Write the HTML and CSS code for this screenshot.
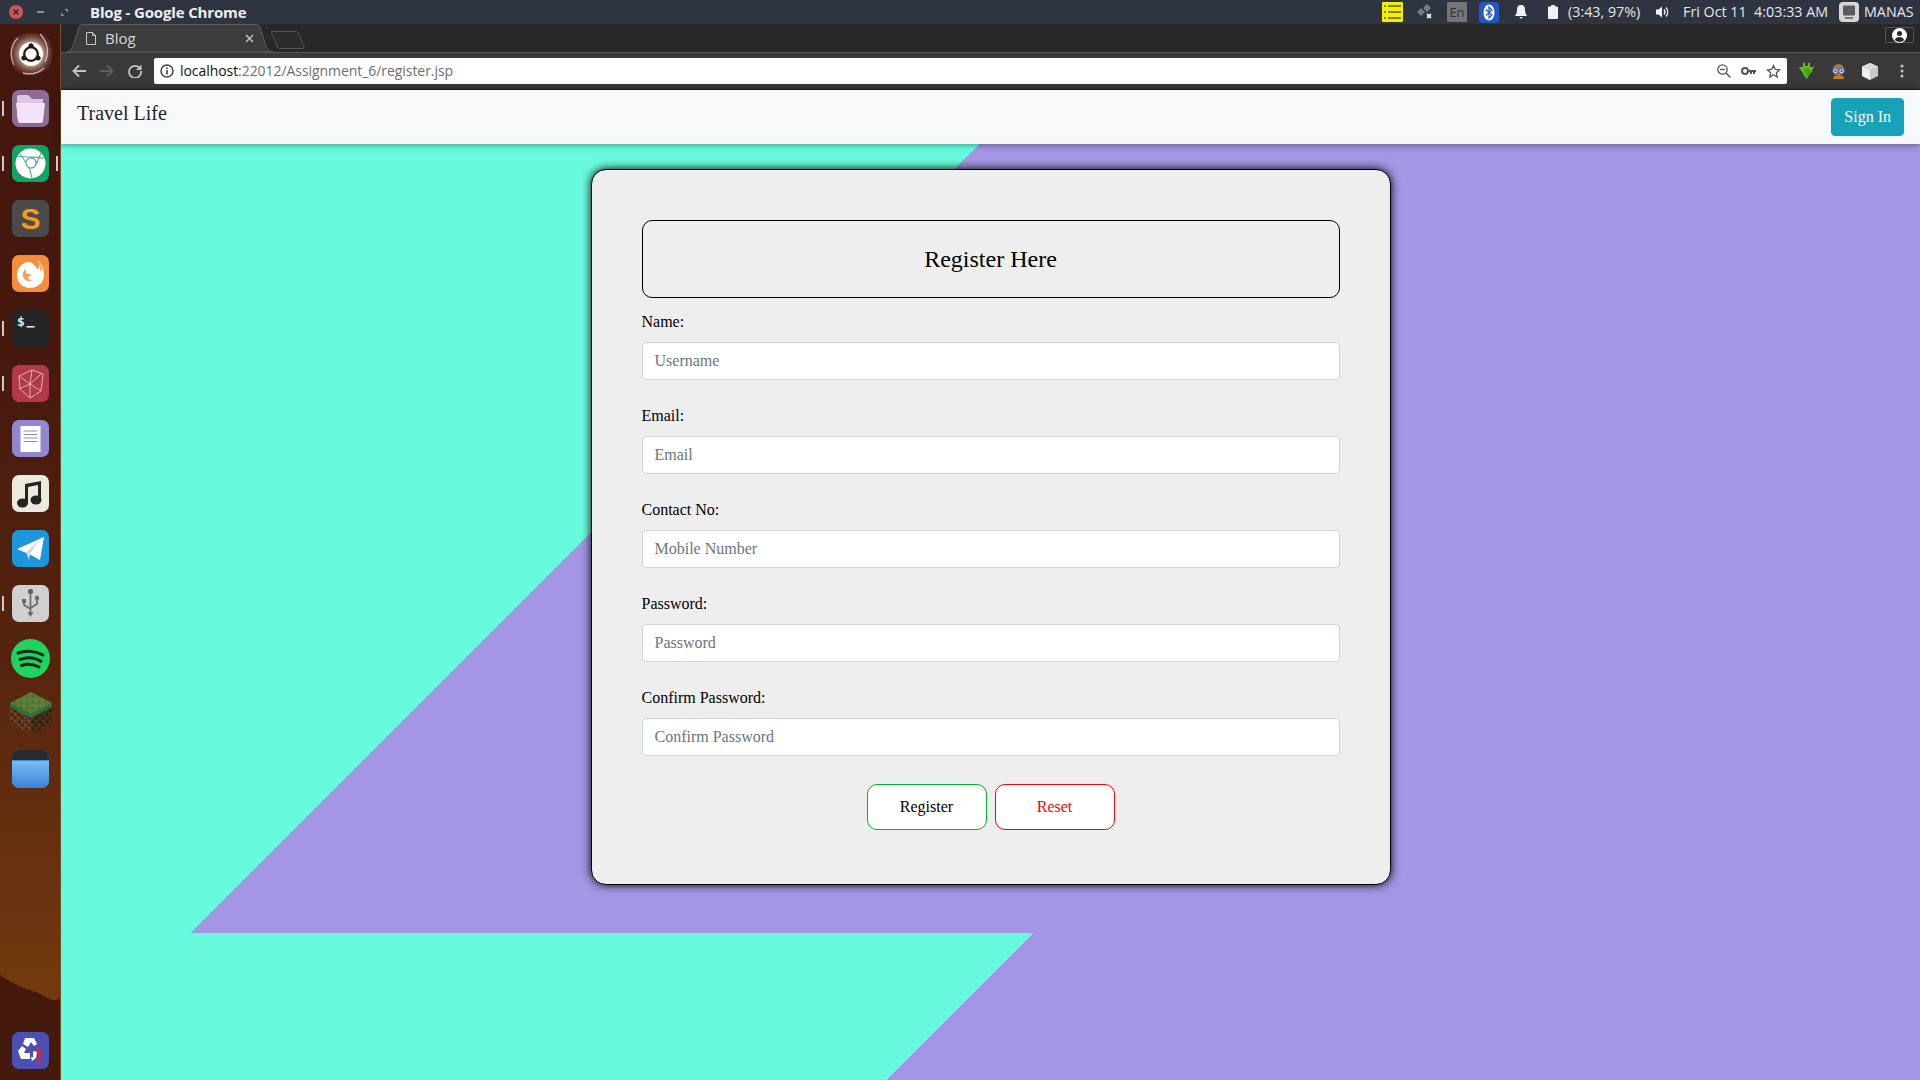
FILE: index.html
```html
<!DOCTYPE html>
<html lang="en">
<head>
<meta charset="utf-8">
<title>Blog</title>
<link rel="stylesheet" href="styles.css">
</head>
<body>
<div class="screen">
  <header class="panel">
    <svg class="win-close" width="14" height="14" viewBox="0 0 14 14"><circle cx="7" cy="7" r="7" fill="#cc575d"/><path d="M4.500 4.500l5 5M9.500 4.500l-5 5" stroke="#3a2a30" stroke-width="1.600"/></svg>
    <svg class="win-min" width="7" height="2" viewBox="0 0 7 2"><rect width="7" height="2" fill="#8a8f9a"/></svg>
    <svg class="win-max" width="7" height="7" viewBox="0 0 7 7"><path d="M3.500 0H7V3.500ZM3.500 7H0V3.500Z" fill="#8a8f9a"/></svg>
    <span class="win-title">Blog - Google Chrome</span>
    <div class="tray">
      <svg class="t-notes" width="21" height="20" viewBox="0 0 21 20"><rect width="21" height="20" rx="1" fill="#f4f000"/><path d="M2 4h2M6 4h13M2 10h2M6 10h13M2 16h2M6 16h13" stroke="#5c5c10" stroke-width="1.600"/></svg>
      <svg class="t-net" width="15" height="16" viewBox="0 0 15 16"><path d="M0 8l4-4 4 4-4 4zM6 4l4-4 4 4-4 4z" fill="#777b84"/><path d="M10 10l4 4M14 10l-4 4" stroke="#eee" stroke-width="1.800"/></svg>
      <span class="t-en">En</span>
      <svg class="t-bt" width="20" height="21" viewBox="0 0 20 21"><rect width="20" height="21" rx="4" fill="#2359c4"/><ellipse cx="10" cy="10.500" rx="5.500" ry="8" fill="#fff"/><path d="M7 7.500l6 5.500-3 3V5l3 3-6 5.500" fill="none" stroke="#2359c4" stroke-width="1.200"/></svg>
      <svg class="t-bell" width="12" height="14" viewBox="0 0 12 14"><path d="M6 0c-3 0-4 2-4 4.500C2 8 1 9.500 0 10.500V11h12v-.5C11 9.500 10 8 10 4.500 10 2 9 0 6 0zM4.500 12a1.500 1.500 0 0 0 3 0z" fill="#f2f2f2"/></svg>
      <svg class="t-bat" width="10" height="14" viewBox="0 0 10 14"><path d="M3 0h4v1.500h2a1 1 0 0 1 1 1V13a1 1 0 0 1-1 1H1a1 1 0 0 1-1-1V2.500a1 1 0 0 1 1-1h2z" fill="#f2f2f2"/></svg>
      <span class="t-text t-battxt">(3:43, 97%)</span>
      <svg class="t-vol" width="13" height="14" viewBox="0 0 13 14"><path d="M0 4.500h2.500L6 1.500v11L2.500 9.500H0z" fill="#f2f2f2"/><path d="M8 4.500a4 4 0 0 1 0 5M10 2.500a7 7 0 0 1 0 9" fill="none" stroke="#f2f2f2" stroke-width="1.300"/></svg>
      <span class="t-text t-clock">Fri Oct 11&nbsp; 4:03:33 AM</span>
      <svg class="t-pc" width="20" height="20" viewBox="0 0 20 20"><rect width="20" height="20" rx="4" fill="#d6d6d6"/><rect x="4" y="3.500" width="12" height="10" rx="1" fill="#5a5a5a"/><rect x="6" y="15" width="8" height="2" fill="#777"/></svg>
      <span class="t-text t-user">MANAS</span>
    </div>
  </header>

  <div class="desk">
    <aside class="dock">
      <svg class="dock-hill" width="60" height="105" viewBox="0 0 60 105"><path d="M0 0C10 7 20 12 30 15S44 22 50 24 56 25 60 23V105H0z" fill="#431a0b"/></svg>

      <div class="cell"><svg width="44" height="44" viewBox="0 0 44 44"><defs><radialGradient id="glow"><stop offset=".45" stop-color="#e8d6cc" stop-opacity=".9"/><stop offset="1" stop-color="#8a5a48" stop-opacity=".25"/></radialGradient></defs><path d="M10 3C20-1 36 0 41 9c4 9 3 24-3 29-8 6-24 7-31 1C1 33 0 20 2 12 3 8 6 5 10 3z" fill="url(#glow)"/><path d="M31 2c7 7 10 18 5 28M5 33C0 24 2 12 9 6M14 41c8 2 16 0 21-5" fill="none" stroke="#f2e6de" stroke-width="1.300" opacity=".7"/><circle cx="22" cy="22" r="12" fill="#fff"/><circle cx="22" cy="22" r="6.800" fill="none" stroke="#2d130c" stroke-width="2.300"/><circle cx="22" cy="13.800" r="2.500" fill="#2d130c"/><circle cx="14.900" cy="26.100" r="2.500" fill="#2d130c"/><circle cx="29.100" cy="26.100" r="2.500" fill="#2d130c"/></svg></div>

      <div class="cell pip-l"><svg width="37" height="37" viewBox="0 0 37 37"><rect width="37" height="37" rx="7" fill="#8c6c92"/><path d="M5 7a2 2 0 0 1 2-2h9l4 4h11v19H5z" fill="#dcc6e4"/><path d="M4 13h29l-2 18a2 2 0 0 1-2 2H8a2 2 0 0 1-2-2z" fill="#f4e2f6"/></svg></div>

      <div class="cell pip-l pip-r"><svg width="37" height="37" viewBox="0 0 37 37"><rect width="37" height="37" rx="7" fill="#10a564"/><circle cx="18.500" cy="18.500" r="15" fill="#fff"/><circle cx="19" cy="18" r="5" fill="#fff" stroke="#5cae8c" stroke-width="1.300"/><path d="M5.500 11.500c6-.5 16 1 27 1.500M8 9l9 13 3 11M29 8c-2 5-4 10-6 13" fill="none" stroke="#5cae8c" stroke-width="1.100"/><circle cx="19" cy="18" r="4.300" fill="#fff"/></svg></div>

      <div class="cell"><svg width="37" height="37" viewBox="0 0 37 37"><rect width="37" height="37" rx="7" fill="#4a4a4a"/><text class="ic-s" x="18.500" y="29" text-anchor="middle">S</text></svg></div>

      <div class="cell"><svg width="37" height="37" viewBox="0 0 37 37"><rect width="37" height="37" rx="7" fill="#f68d3a"/><path d="M18 7c-8 0-13 6-13 13 0 8 6 13 13 13 8 0 14-6 14-13 0-6-2-11-6-15 1 4 1 7 0 10-2-4-5-7-8-8z" fill="#fff"/><path d="M14 14c-3 2-4 5-3 8 2 4 6 5 9 4-2-1-4-2-4-4l4-2-6-2c0-1 0-3 0-4z" fill="#f68d3a" opacity=".85"/><path d="M24 5c3 3 5 7 5 11M27 7c2 3 3 6 3 9" stroke="#f68d3a" stroke-width=".9" fill="none"/></svg></div>

      <div class="cell pip-l"><svg width="37" height="37" viewBox="0 0 37 37"><rect width="37" height="37" rx="7" fill="#252525"/><text class="ic-t" x="5" y="16">$</text><rect x="14.500" y="16" width="8" height="1.600" fill="#e8e8e8"/></svg></div>

      <div class="cell pip-l"><svg width="37" height="37" viewBox="0 0 37 37"><rect width="37" height="37" rx="7" fill="#b23a48"/><path d="M7 11L20 5l11 4-2 17-11 7-10-9zM7 11l11 8 11-10M18 19v14M7 24l11-5 11 7M20 5l-2 14" fill="none" stroke="#e8bcbc" stroke-width=".9"/></svg></div>

      <div class="cell"><svg width="37" height="37" viewBox="0 0 37 37"><rect width="37" height="37" rx="7" fill="#8f88d0"/><rect x="8.500" y="6" width="20" height="26" fill="#fff"/><path d="M11.500 11h14M11.500 14.500h14M11.500 18h14M11.500 21.500h14" stroke="#8f88d0" stroke-width="1.100"/></svg></div>

      <div class="cell"><svg width="37" height="37" viewBox="0 0 37 37"><rect width="37" height="37" rx="7" fill="#ecebdc"/><path d="M13 9l16-3v19h-3V10l-10 2v16h-3z" fill="#25241f"/><ellipse cx="10.500" cy="28" rx="5.500" ry="4.500" fill="#25241f"/><ellipse cx="24" cy="25" rx="5.500" ry="4.500" fill="#25241f"/></svg></div>

      <div class="cell"><svg width="37" height="37" viewBox="0 0 37 37"><rect width="37" height="37" rx="7" fill="#1c96dc"/><path d="M5 19L32 7l-4 23-9-5z" fill="#fff"/><path d="M14 22l15-14-11 16-1 6z" fill="#cfdfec"/></svg></div>

      <div class="cell pip-l"><svg width="37" height="37" viewBox="0 0 37 37"><rect width="37" height="37" rx="7" fill="#d0d0d0"/><circle cx="18.500" cy="6.500" r="2.500" fill="#555"/><path d="M18.500 6v23M12 16v4l6.500 4M25 14v5l-6.500 4" fill="none" stroke="#6a6a6a" stroke-width="1.700"/><rect x="10" y="14" width="4" height="4" fill="#6a6a6a"/><circle cx="25" cy="13" r="2.200" fill="#6a6a6a"/><path d="M15.500 27h6l-3 5z" fill="#6a6a6a"/></svg></div>

      <div class="cell"><svg width="39" height="39" viewBox="0 0 39 39"><circle cx="19.500" cy="19.500" r="19.500" fill="#1ed35f"/><path d="M7 14c8-3 18-2 25 2M9 20.500c7-2.500 15-2 21 2M10.500 26.500c6-2 12-1.500 17.500 1.500" fill="none" stroke="#15261a" stroke-width="3" stroke-linecap="round"/></svg></div>

      <div class="cell"><svg width="42" height="43" viewBox="0 0 42 43"><defs><pattern id="dirt" width="7" height="7" patternUnits="userSpaceOnUse"><rect width="7" height="7" fill="#5c3620"/><rect x="1" y="1" width="2.500" height="2" fill="#3c2212"/><rect x="4.500" y="4" width="2" height="2" fill="#39230f"/><rect x="4" y="0" width="2" height="2" fill="#74482a"/><rect x="0" y="4" width="2" height="2" fill="#74482a"/></pattern><pattern id="grass" width="6" height="6" patternUnits="userSpaceOnUse"><rect width="6" height="6" fill="#5a7a36"/><rect x="1" y="1" width="2" height="2" fill="#668840"/><rect x="4" y="3" width="2" height="2" fill="#4e6e2e"/></pattern></defs><path d="M21 0L42 11V31L21 43 0 31V11z" fill="url(#dirt)"/><path d="M42 11V31L21 43V22z" fill="#1c0e06" opacity=".3"/><path d="M21 0L42 11 21 22 0 11z" fill="url(#grass)"/><path d="M0 11l21 11 21-11v4l-21 11L0 15z" fill="#2f7040"/></svg></div>

      <div class="cell"><svg width="37" height="38" viewBox="0 0 37 38"><defs><linearGradient id="fblue" x1="0" y1="0" x2="0" y2="1"><stop offset="0" stop-color="#76c0ec"/><stop offset="1" stop-color="#3a82dc"/></linearGradient></defs><rect width="37" height="38" rx="7" fill="#3c8be0"/><path d="M0 11h37V30a8 8 0 0 1-8 8H8a8 8 0 0 1-8-8z" fill="url(#fblue)"/><path d="M0 10V7a7 7 0 0 1 7-7h23a7 7 0 0 1 7 7v3z" fill="#2a2a2e"/></svg></div>

      <div class="cell cell-end"><svg width="37" height="37" viewBox="0 0 37 37"><rect width="37" height="37" rx="7" fill="#4a50b4"/><path d="M13 6h9l3 6-3 2-3-4-3 5-5-3zM6 19l4-5 4 3-2 4h6v6H9zM21 19l4 1-1 6-4 3-1-4h2z" fill="#fff"/><rect x="25" y="16" width="3.500" height="11" fill="#e8202c"/><rect x="25" y="29" width="3.500" height="3.500" fill="#e8202c"/></svg></div>
    </aside>

    <div class="window">
      <div class="tabstrip">
        <div class="tab">
          <svg class="tab-shape" width="206" height="28" viewBox="0 0 206 28"><path d="M0 28C3 27 5 25 6 22L12 3C13 1 14 .5 16 .5H189C191 .5 192 1 193 3L199 22C200 25 202 27 206 28z" fill="#3c3c3c" stroke="#5a5a5a"/></svg>
          <svg class="tab-doc" width="10" height="13" viewBox="0 0 10 13"><path d="M.5.5H6.500L9.500 3.500V12.500H.5zM6.500.5V3.500H9.500" fill="none" stroke="#c8c8c8"/></svg>
          <span class="tab-title">Blog</span>
          <svg class="tab-x" width="9" height="9" viewBox="0 0 9 9"><path d="M1 1l7 7M8 1L1 8" stroke="#c0c0c0" stroke-width="1.500"/></svg>
        </div>
        <svg class="newtab" width="35" height="18" viewBox="0 0 35 18"><path d="M1 .5H26C27 .5 28 1 28.500 2L34 16.500C34 17 34 17.500 33 17.500H10C9 17.500 8 17 7.500 16z" fill="#2b2b2b" stroke="#555"/></svg>
        <div class="profile"><svg width="15" height="15" viewBox="0 0 15 15"><circle cx="7.500" cy="7.500" r="7.500" fill="#fff"/><circle cx="7.500" cy="5.500" r="2.500" fill="#282828"/><path d="M2.800 12c.8-2 2.500-3 4.700-3s3.900 1 4.700 3c-1.200 1.300-2.800 2-4.700 2s-3.500-.7-4.700-2z" fill="#282828"/></svg></div>
      </div>

      <div class="toolbar">
        <svg class="tb-back" width="14" height="14" viewBox="0 0 14 14"><path d="M14 7H2M7 1.500L1.500 7 7 12.500" fill="none" stroke="#c4c4c4" stroke-width="1.900"/></svg>
        <svg class="tb-fwd" width="14" height="14" viewBox="0 0 14 14"><path d="M0 7h12M7 1.500L12.500 7 7 12.500" fill="none" stroke="#5e5e5e" stroke-width="1.900"/></svg>
        <svg class="tb-reload" width="14" height="14" viewBox="0 0 14 14"><path d="M12 4.500A6 6 0 1 0 13 7" fill="none" stroke="#c4c4c4" stroke-width="1.800"/><path d="M13.500 .5V6H8z" fill="#c4c4c4"/></svg>
        <div class="omnibox">
          <svg class="om-info" width="14" height="14" viewBox="0 0 14 14"><circle cx="7" cy="7" r="6" fill="none" stroke="#444" stroke-width="1.500"/><rect x="6.200" y="6" width="1.600" height="4.500" fill="#444"/><rect x="6.200" y="3.500" width="1.600" height="1.600" fill="#444"/></svg>
          <span class="om-url"><span class="om-host">localhost</span>:22012/Assignment_6/register.jsp</span>
          <svg class="om-zoom" width="14" height="14" viewBox="0 0 14 14"><circle cx="5.500" cy="5.500" r="4.700" fill="none" stroke="#555" stroke-width="1.300"/><path d="M9 9l4.500 4.500" stroke="#555" stroke-width="1.500"/><path d="M3 5.500h5" stroke="#555" stroke-width="1.200"/></svg>
          <svg class="om-key" width="15" height="8" viewBox="0 0 15 8"><circle cx="4" cy="4" r="3" fill="none" stroke="#555" stroke-width="2"/><path d="M7 3h8v2h-1v2h-2V5h-1v2H9V5H7z" fill="#555"/></svg>
          <svg class="om-star" width="15" height="15" viewBox="0 0 15 15"><path d="M7.500 1.500l1.800 4 4.300.4-3.300 2.900 1 4.300-3.800-2.300-3.800 2.300 1-4.300L1.400 5.900l4.300-.4z" fill="none" stroke="#555" stroke-width="1.300"/></svg>
        </div>
        <svg class="ext-dl" width="15" height="16" viewBox="0 0 15 16"><path d="M4 0h2v3H4zM9 0h2v3H9zM0 4h4V3h7v1h4L7.500 16z" fill="#5fc21a"/><path d="M4 5h7v3h3l-6.500 6z" fill="#48a510"/></svg>
        <svg class="ext-av" width="15" height="16" viewBox="0 0 15 16"><circle cx="7.500" cy="7" r="6" fill="#a57a48"/><circle cx="4.500" cy="8" r="2.700" fill="#dfe6fa" stroke="#2f55d0"/><circle cx="10.500" cy="8" r="2.700" fill="#dfe6fa" stroke="#2f55d0"/><circle cx="4.500" cy="8" r="1" fill="#333"/><circle cx="10.500" cy="8" r="1" fill="#333"/><path d="M3 13h9l1 3H2z" fill="#c47a30"/></svg>
        <svg class="ext-cube" width="16" height="17" viewBox="0 0 16 17"><path d="M8 0l8 3.500V13l-8 4-8-4V3.500z" fill="#c8c8c8"/><path d="M0 3.500L8 7v10L0 13z" fill="#eee"/><path d="M8 0l8 3.500L8 7 0 3.500z" fill="#dcdcdc"/></svg>
        <svg class="tb-menu" width="4" height="14" viewBox="0 0 4 14"><circle cx="2" cy="2" r="1.500" fill="#c4c4c4"/><circle cx="2" cy="7" r="1.500" fill="#c4c4c4"/><circle cx="2" cy="12" r="1.500" fill="#c4c4c4"/></svg>
      </div>

      <nav class="navbar">
        <a class="brand">Travel Life</a>
        <button class="signin" type="button">Sign In</button>
      </nav>

      <main class="page">
        <form class="card">
          <h3 class="card-head">Register Here</h3>
          <div class="field">
            <label class="field-label">Name:</label>
            <input class="field-input" type="text" placeholder="Username">
          </div>
          <div class="field">
            <label class="field-label">Email:</label>
            <input class="field-input" type="text" placeholder="Email">
          </div>
          <div class="field">
            <label class="field-label">Contact No:</label>
            <input class="field-input" type="text" placeholder="Mobile Number">
          </div>
          <div class="field">
            <label class="field-label">Password:</label>
            <input class="field-input" type="text" placeholder="Password">
          </div>
          <div class="field">
            <label class="field-label">Confirm Password:</label>
            <input class="field-input" type="text" placeholder="Confirm Password">
          </div>
          <div class="actions">
            <button class="btn btn-ok" type="button">Register</button>
            <button class="btn btn-reset" type="button">Reset</button>
          </div>
        </form>
      </main>
    </div>
  </div>
</div>
</body>
</html>
```
FILE: styles.css
```css
* { box-sizing: border-box; }
html, body { margin: 0; height: 100%; overflow: hidden; }
body { font-family: "Liberation Serif", serif; font-size: 16px; line-height: 24px; color: #000; }
svg { display: block; flex: none; }

.screen { display: flex; flex-direction: column; height: 100vh; }

/* top panel */
.panel { display: flex; align-items: center; height: 24px; flex: none; background: #2f3441; font-family: "Open Sans", sans-serif; color: #e8e8e8; }
.win-close { margin-left: 9px; }
.win-min { margin-left: 14px; }
.win-max { margin-left: 17px; }
.win-title { margin-left: 22px; font-size: 15px; font-weight: 700; color: #eef0f2; white-space: nowrap; letter-spacing: -.15px; }
.tray { display: flex; align-items: center; margin-left: auto; padding-right: 5px; }
.t-text { font-size: 14.3px; white-space: nowrap; color: #e6e8ea; }
.t-net { margin-left: 14px; }
.t-en { margin-left: 15px; width: 20px; height: 20px; background: #757575; border-radius: 1px; color: #333; font-size: 13px; line-height: 20px; text-align: center; }
.t-bt { margin-left: 12px; }
.t-bell { margin-left: 16px; }
.t-bat { margin-left: 21px; }
.t-battxt { margin-left: 10px; width: 73px; }
.t-vol { margin-left: 15px; }
.t-clock { margin-left: 14px; width: 145px; }
.t-pc { margin-left: 11px; }
.t-user { margin-left: 5px; width: 51px; }

/* body of the desktop */
.desk { display: flex; flex: 1; min-height: 0; }

.dock { position: relative; width: 61px; flex: none; display: flex; flex-direction: column; padding: 2px 0 2px 1px; border-right: 1px solid #7a4a20; background: linear-gradient(#44170f 0, #46190e 30%, #56240e 60%, #683210 80%, #7a3f0d 100%); }
.dock-hill { position: absolute; left: 0; bottom: 0; }
.cell { position: relative; height: 55px; flex: none; display: flex; align-items: center; justify-content: center; }
.cell-end { margin-top: auto; }
.pip-l::before, .pip-r::after { content: ""; position: absolute; top: 20px; width: 2px; height: 15px; background: #cfcac6; }
.pip-l::before { left: 1px; }
.pip-r::after { right: 2px; }
.ic-s { font: 700 30px "Liberation Sans", sans-serif; fill: #f79a20; }
.ic-t { font: 700 13px "DejaVu Sans Mono", monospace; fill: #e8e8e8; }

/* browser window */
.window { flex: 1; min-width: 0; display: flex; flex-direction: column; }
.tabstrip { display: flex; height: 28px; flex: none; padding: 0 6px; background: #282828; }
.tab { position: relative; display: flex; align-items: center; width: 206px; flex: none; padding: 0 19px; font-family: "Open Sans", sans-serif; }
.tab-shape { position: absolute; left: 0; top: 0; }
.tab-doc { position: relative; }
.tab-title { position: relative; margin-left: 9px; font-size: 15px; color: #d8d8d8; }
.tab-x { position: relative; margin-left: auto; }
.newtab { margin: 7px 0 0 -3px; }
.profile { display: flex; align-items: center; justify-content: center; margin: 3px 0 0 auto; width: 29px; height: 16px; border: 1px solid #555; border-radius: 1px; }

.toolbar { display: flex; align-items: center; height: 38px; flex: none; padding-right: 16px; background: #3a3a3a; border-top: 1px solid #565656; border-bottom: 1px solid #222; font-family: "Open Sans", sans-serif; }
.tb-back { margin-left: 11px; }
.tb-fwd, .tb-reload { margin-left: 14px; }
.omnibox { display: flex; align-items: center; flex: 1; height: 26px; margin-left: 12px; padding: 0 6px; background: #fff; border-radius: 2px; }
.om-url { margin-left: 6px; font-size: 14px; color: #6e6e6e; white-space: nowrap; letter-spacing: -.06px; }
.om-host { color: #111; }
.om-zoom { margin-left: auto; }
.om-key { margin-left: 10px; }
.om-star { margin-left: 10px; }
.ext-dl { margin-left: 12px; }
.ext-av { margin-left: 17px; }
.ext-cube { margin-left: 16px; }
.tb-menu { margin-left: 22px; }

/* site */
.navbar { position: relative; z-index: 1; display: flex; justify-content: space-between; align-items: flex-start; height: 54px; flex: none; padding: 8px 16px; background: #f8f9fa; box-shadow: 0 0 7px rgba(0, 0, 0, .5); }
.brand { font-size: 20px; line-height: 30px; color: #212529; }
.signin { height: 38px; padding: 0 12px; border: 1px solid #17a2b8; border-radius: 4px; background: #17a2b8; color: #fff; font: inherit; }

.page { flex: 1; min-height: 0; padding-top: 25px; background-color: #a396e5; background-image: linear-gradient(135deg, #69fadd 649.8px, #a396e5 649.8px), linear-gradient(135deg, #69fadd 688px, #a396e5 688px); background-size: 100% 789px, 100% 147px; background-position: 0 0, 0 789px; background-repeat: no-repeat; }
.card { width: 800px; margin: 0 auto; padding: 50px; background: #eee; border: 1px solid #000; border-radius: 15px; box-shadow: 0 0 10px #000; }
.card-head { margin: 0 0 12px; padding: 24px 0; border: 1px solid #000; border-radius: 10px; font-size: 24px; font-weight: 400; line-height: 28px; text-align: center; }
.field { margin-bottom: 24px; }
.field-label { display: block; margin-bottom: 8px; }
.field-input { display: block; width: 100%; height: 38px; padding: 6px 12px; border: 1px solid #ced4da; border-radius: 4px; background: #fff; font: inherit; color: #495057; }
.field-input::placeholder { color: #6c757d; opacity: 1; }
.actions { display: flex; justify-content: center; gap: 8px; padding: 4px 0; }
.btn { width: 120px; height: 46px; padding: 0; background: #fff; border: 1px solid; border-radius: 10px; font: inherit; }
.btn-ok { border-color: #00b81f; color: #000; }
.btn-reset { border-color: #f00; color: #f00; }
```
